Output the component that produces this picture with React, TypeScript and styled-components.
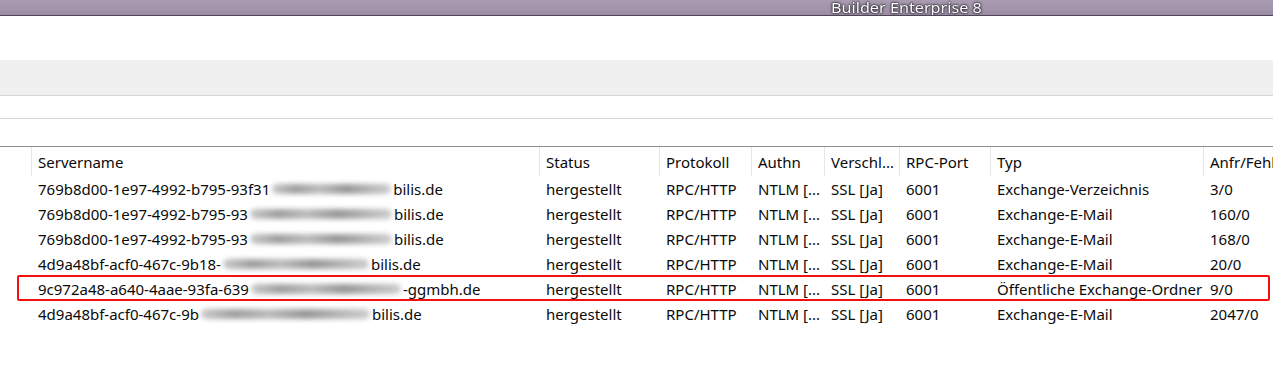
import React from "react";
import styled, { createGlobalStyle } from "styled-components";

const Global = createGlobalStyle`
  html, body { margin: 0; padding: 0; background: #ffffff; }
  body { font-family: "Noto Sans", "Open Sans", sans-serif; width: 1273px; overflow: hidden; }
`;

const Page = styled.div`
  width: 1273px;
  height: 383px;
  display: flex;
  flex-direction: column;
  background: #fff;
  overflow: hidden;
`;

const TitleBar = styled.div`
  height: 15px;
  border-bottom: 1px solid #4d4553;
  background: linear-gradient(to bottom, #a99bb1 0%, #a394ab 60%, #9a8ba3 100%);
  display: flex;
  align-items: flex-end;
  padding-left: 831px;
  overflow: hidden;
`;

const TitleText = styled.span`
  font-family: "Noto Sans", sans-serif;
  font-size: 15px;
  line-height: 15px;
  color: #ffffff;
  white-space: nowrap;
  transform: translateY(0px) scaleX(1.08);
  transform-origin: left bottom;
  text-shadow: 0 0 2px #1d1a22, 0 0 3px #2a2430, 0 0 1px #000;
`;

const Spacer = styled.div<{ h: number }>`
  height: ${(p) => p.h}px;
  background: #ffffff;
`;

const GrayBand = styled.div`
  height: 35px;
  background: #f0f0f0;
  border-bottom: 1px solid #d6d6d6;
`;

const Strip = styled.div<{ h: number; dark?: boolean }>`
  height: ${(p) => p.h}px;
  background: #ffffff;
  border-bottom: 1px solid ${(p) => (p.dark ? "#8e8e8e" : "#d6d6d6")};
`;

const COLS = "31px 508px 120px 92px 73px 75px 91px 213px 1fr";

const Table = styled.div`
  display: flex;
  flex-direction: column;
  font-size: 15px;
  color: #0a0a0a;
`;

const HeaderRow = styled.div`
  display: grid;
  grid-template-columns: ${COLS};
  height: 29px;
`;

const HeaderCell = styled.div<{ sep?: boolean }>`
  display: flex;
  align-items: center;
  padding-left: 6px;
  padding-top: 0px;
  border-left: ${(p) => (p.sep ? "1px solid #e6e6e6" : "none")};
  white-space: nowrap;
  overflow: hidden;
`;

const Row = styled.div<{ marked?: boolean }>`
  display: grid;
  grid-template-columns: ${COLS};
  height: 25px;
  position: relative;
  &::after {
    content: "";
    display: ${(p) => (p.marked ? "block" : "none")};
    position: absolute;
    left: 17px;
    right: 3px;
    top: -1px;
    bottom: 0px;
    border: 2px solid #f01010;
    border-radius: 2px;
    pointer-events: none;
  }
`;

const Cell = styled.div`
  display: flex;
  align-items: center;
  padding-left: 7px;
  white-space: nowrap;
  overflow: hidden;
`;

const Smear = styled.span<{ w: number }>`
  display: inline-block;
  width: ${(p) => p.w}px;
  height: 14px;
  position: relative;
  flex-shrink: 0;
  &::before {
    content: "";
    position: absolute;
    left: 2px;
    right: 2px;
    top: 2px;
    bottom: 2px;
    border-radius: 6px;
    background: linear-gradient(
      to right,
      #c0c0c0 0%,
      #8e8e8e 20%,
      #b0b0b0 40%,
      #858585 62%,
      #a8a8a8 82%,
      #c4c4c4 100%
    );
    filter: blur(2.5px);
    opacity: 0.85;
  }
`;

type Data = {
  pre: string;
  blur: number;
  post: string;
  typ: string;
  count: string;
  marked?: boolean;
};

const rows: Data[] = [
  { pre: "769b8d00-1e97-4992-b795-93f31", blur: 123, post: "bilis.de", typ: "Exchange-Verzeichnis", count: "3/0" },
  { pre: "769b8d00-1e97-4992-b795-93", blur: 146, post: "bilis.de", typ: "Exchange-E-Mail", count: "160/0" },
  { pre: "769b8d00-1e97-4992-b795-93", blur: 146, post: "bilis.de", typ: "Exchange-E-Mail", count: "168/0" },
  { pre: "4d9a48bf-acf0-467c-9b18-", blur: 150, post: "bilis.de", typ: "Exchange-E-Mail", count: "20/0" },
  { pre: "9c972a48-a640-4aae-93fa-639", blur: 154, post: "-ggmbh.de", typ: "Öffentliche Exchange-Ordner", count: "9/0", marked: true },
  { pre: "4d9a48bf-acf0-467c-9b", blur: 173, post: "bilis.de", typ: "Exchange-E-Mail", count: "2047/0" },
];

const headers = ["Servername", "Status", "Protokoll", "Authn", "Verschl...", "RPC-Port", "Typ", "Anfr/Fehler"];

export default function App() {
  return (
    <Page>
      <Global />
      <TitleBar>
        <TitleText>Builder Enterprise 8</TitleText>
      </TitleBar>
      <Spacer h={44} />
      <GrayBand />
      <Strip h={22} />
      <Strip h={27} dark />
      <Table>
        <HeaderRow>
          <HeaderCell />
          {headers.map((h) => (
            <HeaderCell key={h} sep>
              {h}
            </HeaderCell>
          ))}
        </HeaderRow>
        {rows.map((r, i) => (
          <Row key={i} marked={r.marked}>
            <Cell />
            <Cell>
              {r.pre}
              <Smear w={r.blur} />
              {r.post}
            </Cell>
            <Cell>hergestellt</Cell>
            <Cell>RPC/HTTP</Cell>
            <Cell>NTLM [...</Cell>
            <Cell>SSL [Ja]</Cell>
            <Cell>6001</Cell>
            <Cell>{r.typ}</Cell>
            <Cell>{r.count}</Cell>
          </Row>
        ))}
      </Table>
    </Page>
  );
}
